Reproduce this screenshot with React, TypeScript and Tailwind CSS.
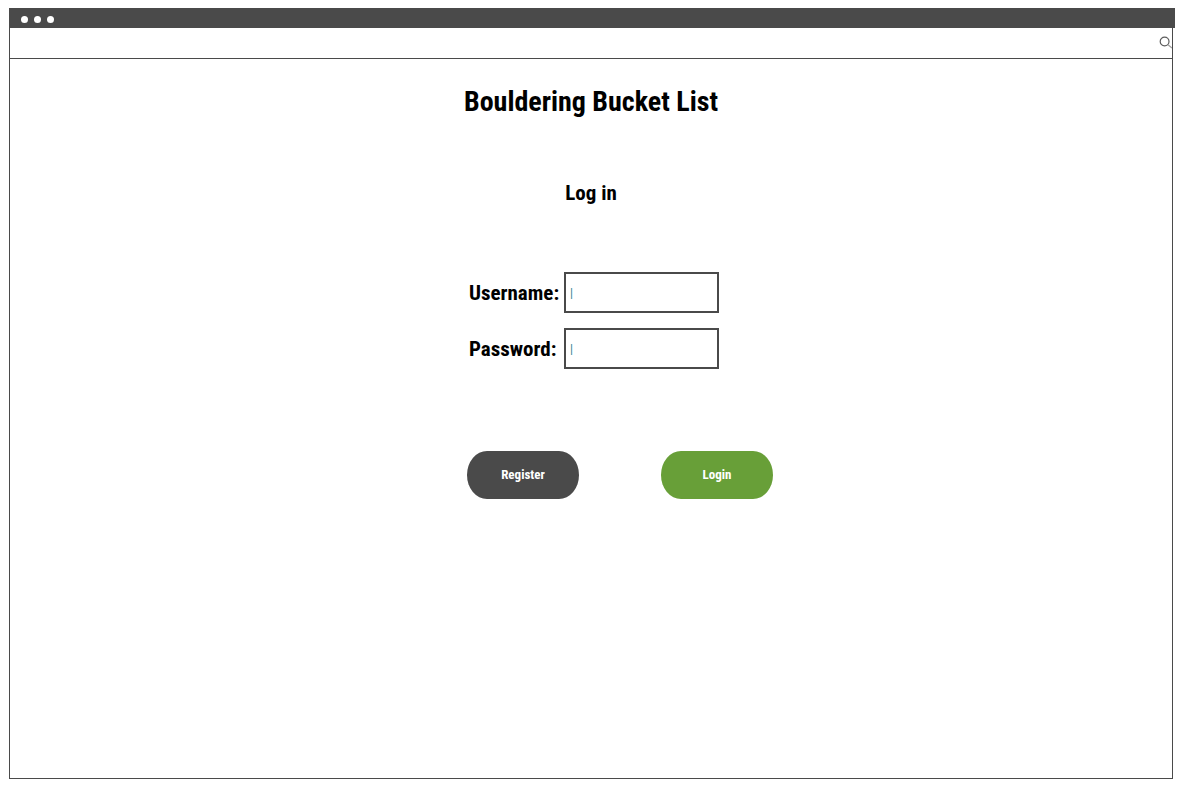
type FieldProps = {
  id: string;
  label: string;
  type: string;
};

function Field({ id, label, type }: FieldProps) {
  return (
    <div className="flex h-[41px] items-center">
      <label htmlFor={id} className="w-[95px] shrink-0 text-[21px] leading-8 font-bold">
        {label}
      </label>
      <input
        id={id}
        type={type}
        placeholder="|"
        className="h-full w-[155px] border-2 border-[#4a4a4a] bg-white px-1 text-xs text-black outline-none placeholder:text-[#2f7f93]"
      />
    </div>
  );
}

function SearchIcon() {
  return (
    <svg width="13" height="13" viewBox="0 0 13 13" fill="none" aria-hidden="true">
      <circle cx="5.6" cy="5.5" r="4.4" stroke="#5c5c5c" strokeWidth="1.2" />
      <path d="M9 8.8L13 12" stroke="#a0a0a0" strokeWidth="1.3" />
    </svg>
  );
}

export default function App() {
  return (
    <div className="flex min-h-screen flex-col bg-white pt-2 pr-[7px] pb-3 pl-[9px] font-['Agency_FB','Roboto_Condensed','Liberation_Sans_Narrow','Roboto',sans-serif] text-black">
      <header className="flex h-5 items-center gap-[6px] bg-[#4a4a4a] px-3 pt-[2px]">
        <span className="size-[7px] rounded-full bg-white" />
        <span className="size-[7px] rounded-full bg-white" />
        <span className="size-[7px] rounded-full bg-white" />
      </header>
      <div className="mr-[2px] flex flex-1 flex-col border-x border-b border-[#4a4a4a]">
        <div className="flex h-[31px] items-center justify-end border-b border-[#4a4a4a] pb-[2px]">
          <button type="button" aria-label="Search">
            <SearchIcon />
          </button>
        </div>
        <main className="flex-1 pt-[23px]">
          <h1 className="text-center text-[28px] leading-10 font-bold">Bouldering Bucket List</h1>
          <h2 className="mt-[55px] text-center text-[21px] leading-8 font-bold">Log in</h2>
          <form className="mt-[63px] ml-[calc(50%-124px)] w-fit" onSubmit={(e) => e.preventDefault()}>
            <div className="flex flex-col gap-[15px] pl-[2px]">
              <Field id="username" label="Username:" type="text" />
              <Field id="password" label="Password:" type="password" />
            </div>
            <div className="mt-[82px] flex gap-[82px]">
              <button type="button" className="h-12 w-28 rounded-[20px/24px] bg-[#4a4a4a] text-[13px] font-bold text-white">
                Register
              </button>
              <button type="submit" className="h-12 w-28 rounded-[20px/24px] bg-[#689f38] text-[13px] font-bold text-white">
                Login
              </button>
            </div>
          </form>
        </main>
      </div>
    </div>
  );
}
